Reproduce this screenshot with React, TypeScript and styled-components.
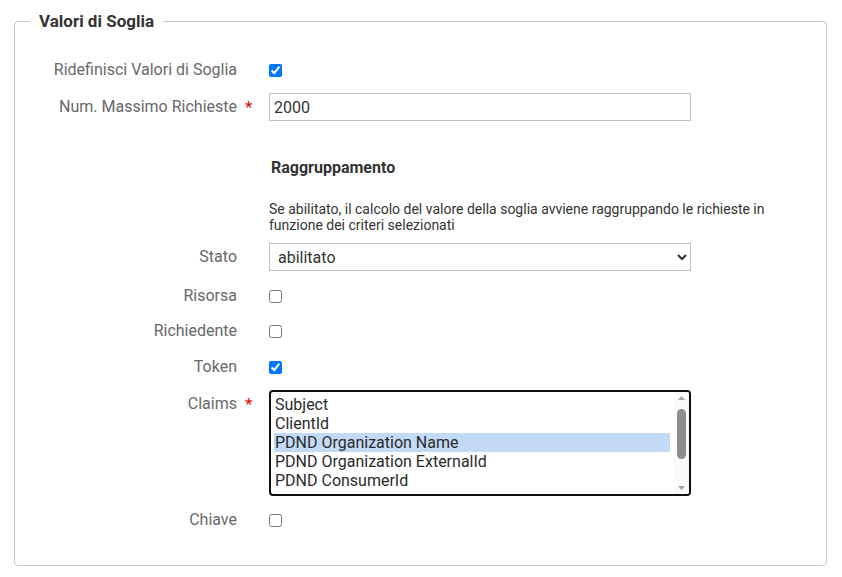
import { createGlobalStyle } from "styled-components";
import styled from "styled-components";

const GlobalStyle = createGlobalStyle`
  body {
    margin: 0;
    background: #ffffff;
    font-family: Roboto, "Liberation Sans", sans-serif;
  }
`;

const claimOptions = [
  "Subject",
  "ClientId",
  "PDND Organization Name",
  "PDND Organization ExternalId",
  "PDND ConsumerId",
];

type RowProps = {
  label: string;
  required?: boolean;
  top?: number;
  align?: "center" | "start";
  children: React.ReactNode;
};

const FormRow = ({ label, required, top = 11, align = "center", children }: RowProps) => (
  <Row $top={top} $align={align}>
    <Label $pad={align === "start" ? 2 : 0}>{label}</Label>
    <Required $pad={align === "start" ? 2 : 0}>{required ? "*" : ""}</Required>
    <Control>{children}</Control>
  </Row>
);

const ScrollArrow = ({ down }: { down?: boolean }) => (
  <svg width="15" height="12" viewBox="0 0 15 12">
    <path d={down ? "M4 4 L11 4 L7.5 8 Z" : "M4 8 L11 8 L7.5 4 Z"} fill="#a3a3a3" />
  </svg>
);

const App = (): JSX.Element => {
  return (
    <Page>
      <GlobalStyle />
      <Fieldset>
        <Legend>Valori di Soglia</Legend>
        <FormRow label="Ridefinisci Valori di Soglia" top={0}>
          <Check type="checkbox" defaultChecked />
        </FormRow>
        <FormRow label="Num. Massimo Richieste" required>
          <TextInput type="text" defaultValue="2000" />
        </FormRow>
        <Row $top={35} $align="center">
          <Label />
          <Required />
          <Control>
            <SubTitle>Raggruppamento</SubTitle>
          </Control>
        </Row>
        <Row $top={21} $align="center">
          <Label />
          <Required />
          <Control $wide>
            <Note>
              Se abilitato, il calcolo del valore della soglia avviene raggruppando le richieste in
              funzione dei criteri selezionati
            </Note>
          </Control>
        </Row>
        <FormRow label="Stato" top={10}>
          <Select defaultValue="abilitato">
            <option value="abilitato">abilitato</option>
            <option value="disabilitato">disabilitato</option>
          </Select>
        </FormRow>
        <FormRow label="Risorsa" top={13}>
          <Check type="checkbox" />
        </FormRow>
        <FormRow label="Richiedente">
          <Check type="checkbox" />
        </FormRow>
        <FormRow label="Token" top={12}>
          <Check type="checkbox" defaultChecked />
        </FormRow>
        <FormRow label="Claims" required align="start">
          <ListBox>
            <ListItems>
              {claimOptions.map((opt) => (
                <ListOption key={opt} $selected={opt === "PDND Organization Name"}>
                  {opt}
                </ListOption>
              ))}
            </ListItems>
            <ScrollBar>
              <ScrollArrow />
              <Thumb />
              <ScrollArrow down />
            </ScrollBar>
          </ListBox>
        </FormRow>
        <FormRow label="Chiave" top={12}>
          <Check type="checkbox" />
        </FormRow>
      </Fieldset>
    </Page>
  );
};

export default App;

const Page = styled.div`
  padding: 11px 15px 12px 14px;
`;

const Fieldset = styled.fieldset`
  margin: 0;
  padding: 27px 0 33px 0;
  border: 1px solid #c8c8c8;
  border-radius: 4px;
`;

const Legend = styled.legend`
  margin-left: 15px;
  padding: 0 9px;
  font-size: 17px;
  line-height: 20px;
  font-weight: 700;
  color: #333333;
`;

const Row = styled.div<{ $top: number; $align: "center" | "start" }>`
  display: flex;
  align-items: ${(p) => (p.$align === "start" ? "flex-start" : "center")};
  margin-top: ${(p) => p.$top}px;
  min-height: 24px;
`;

const Label = styled.div<{ $pad?: number }>`
  width: 222px;
  flex-shrink: 0;
  padding-top: ${(p) => p.$pad ?? 0}px;
  text-align: right;
  font-size: 16px;
  line-height: 24px;
  color: #686868;
`;

const Required = styled.div<{ $pad?: number }>`
  width: 32px;
  flex-shrink: 0;
  padding-left: 8px;
  padding-top: ${(p) => p.$pad ?? 0}px;
  box-sizing: border-box;
  color: #e00000;
  font-size: 17px;
  line-height: 24px;
`;

const Control = styled.div<{ $wide?: boolean }>`
  width: ${(p) => (p.$wide ? "520px" : "422px")};
  display: flex;
  align-items: center;
`;

const Check = styled.input`
  width: 13px;
  height: 13px;
  margin: 0;
`;

const TextInput = styled.input`
  width: 100%;
  height: 28px;
  box-sizing: border-box;
  border: 1px solid #c0c0c0;
  border-radius: 0;
  padding: 0 4px;
  font-family: Roboto, "Liberation Sans", sans-serif;
  font-size: 16px;
  color: #333333;
  outline: none;
`;

const Select = styled.select`
  width: 100%;
  height: 28px;
  box-sizing: border-box;
  border: 1px solid #c0c0c0;
  border-radius: 0;
  padding: 0 4px;
  background: #ffffff;
  font-family: Roboto, "Liberation Sans", sans-serif;
  font-size: 16px;
  color: #333333;
`;

const SubTitle = styled.div`
  padding-left: 2px;
  font-size: 16px;
  line-height: 24px;
  font-weight: 700;
  color: #333333;
`;

const Note = styled.div`
  font-size: 14px;
  line-height: 16px;
  color: #333333;
`;

const ListBox = styled.div`
  width: 100%;
  height: 106px;
  box-sizing: border-box;
  display: flex;
  border: 2px solid #101010;
  border-radius: 4px;
  overflow: hidden;
`;

const ListItems = styled.div`
  flex: 1;
  padding: 3px 4px 0 3px;
`;

const ListOption = styled.div<{ $selected: boolean }>`
  font-size: 16px;
  line-height: 19px;
  padding-left: 1px;
  color: #2a2a2a;
  background: ${(p) => (p.$selected ? "#c3daf6" : "transparent")};
  white-space: nowrap;
`;

const ScrollBar = styled.div`
  width: 15px;
  display: flex;
  flex-direction: column;
  align-items: center;
  background: #fafafa;
`;

const Thumb = styled.div`
  width: 9px;
  height: 50px;
  margin-top: 5px;
  margin-bottom: auto;
  border-radius: 5px;
  background: #8e8e8e;
`;
